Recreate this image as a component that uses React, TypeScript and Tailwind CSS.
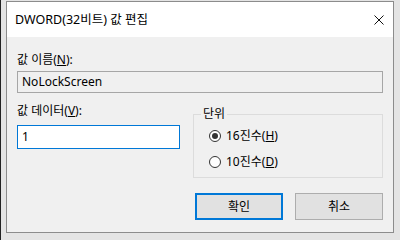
import React from "react";

const font = { fontFamily: "'Noto Sans', 'Noto Sans CJK KR', sans-serif" };

function Radio({ checked, label, mn }: { checked: boolean; label: string; mn: string }) {
  return (
    <div className="flex items-center h-[16px]">
      <div className="w-[12px] h-[12px] rounded-full border border-[#333] bg-white flex items-center justify-center">
        {checked && <div className="w-[6px] h-[6px] rounded-full bg-[#333]" />}
      </div>
      <span className="ml-[5px] text-[12px] leading-[16px] text-black">
        {label}(<span className="underline">{mn}</span>)
      </span>
    </div>
  );
}

export default function App() {
  return (
    <div className="w-[400px] h-[240px] bg-[#e4e4e4] border-l border-l-[#222] overflow-hidden" style={font}>
      <div className="ml-[5px] mt-[1px] w-[388px] h-[232px] border border-[#8c8c8c] flex flex-col bg-[#f0f0f0]">
        <div className="h-[35px] bg-white flex items-center justify-between pl-[8px] pr-[9px]">
          <span className="text-[12.5px] leading-[16px] text-black">DWORD(32비트) 값 편집</span>
          <svg width="10" height="10" viewBox="0 0 10 10">
            <path d="M0.5 0.5 L9.5 9.5 M9.5 0.5 L0.5 9.5" stroke="#111" strokeWidth="1" />
          </svg>
        </div>
        <div className="flex-1 flex flex-col px-[10px]">
          <div className="mt-[15px] text-[12px] leading-[16px] text-black">
            값 이름(<span className="underline">N</span>):
          </div>
          <div className="mt-[3px] h-[22px] border border-[#a6a6a6] bg-[#f0f0f0] flex items-center pl-[4px] text-[12px] text-black">
            NoLockScreen
          </div>
          <div className="mt-[10px] flex gap-[13px]">
            <div className="w-[163px] flex flex-col">
              <div className="text-[12px] leading-[16px] text-black">
                값 데이터(<span className="underline">V</span>):
              </div>
              <div className="mt-[6px] h-[24px] border border-[#0078d7] bg-white flex items-center pl-[4px] text-[12px] text-black">
                1
              </div>
            </div>
            <fieldset className="flex-1 border border-[#dcdcdc] h-[72px] mt-[3px]">
              <legend className="ml-[7px] px-[2px] text-[12px] leading-[16px] text-black">단위</legend>
              <div className="flex flex-col gap-[10px] mt-[6px] pl-[15px]">
                <Radio checked label="16진수" mn="H" />
                <Radio checked={false} label="10진수" mn="D" />
              </div>
            </fieldset>
          </div>
          <div className="mt-[15px] flex justify-end gap-[12px]">
            <div className="w-[88px] h-[27px] border-2 border-[#0078d7] bg-[#e1e1e1] flex items-center justify-center text-[12px] text-black">
              확인
            </div>
            <div className="w-[88px] h-[27px] border border-[#adadad] bg-[#e1e1e1] flex items-center justify-center text-[12px] text-black">
              취소
            </div>
          </div>
        </div>
      </div>
    </div>
  );
}
